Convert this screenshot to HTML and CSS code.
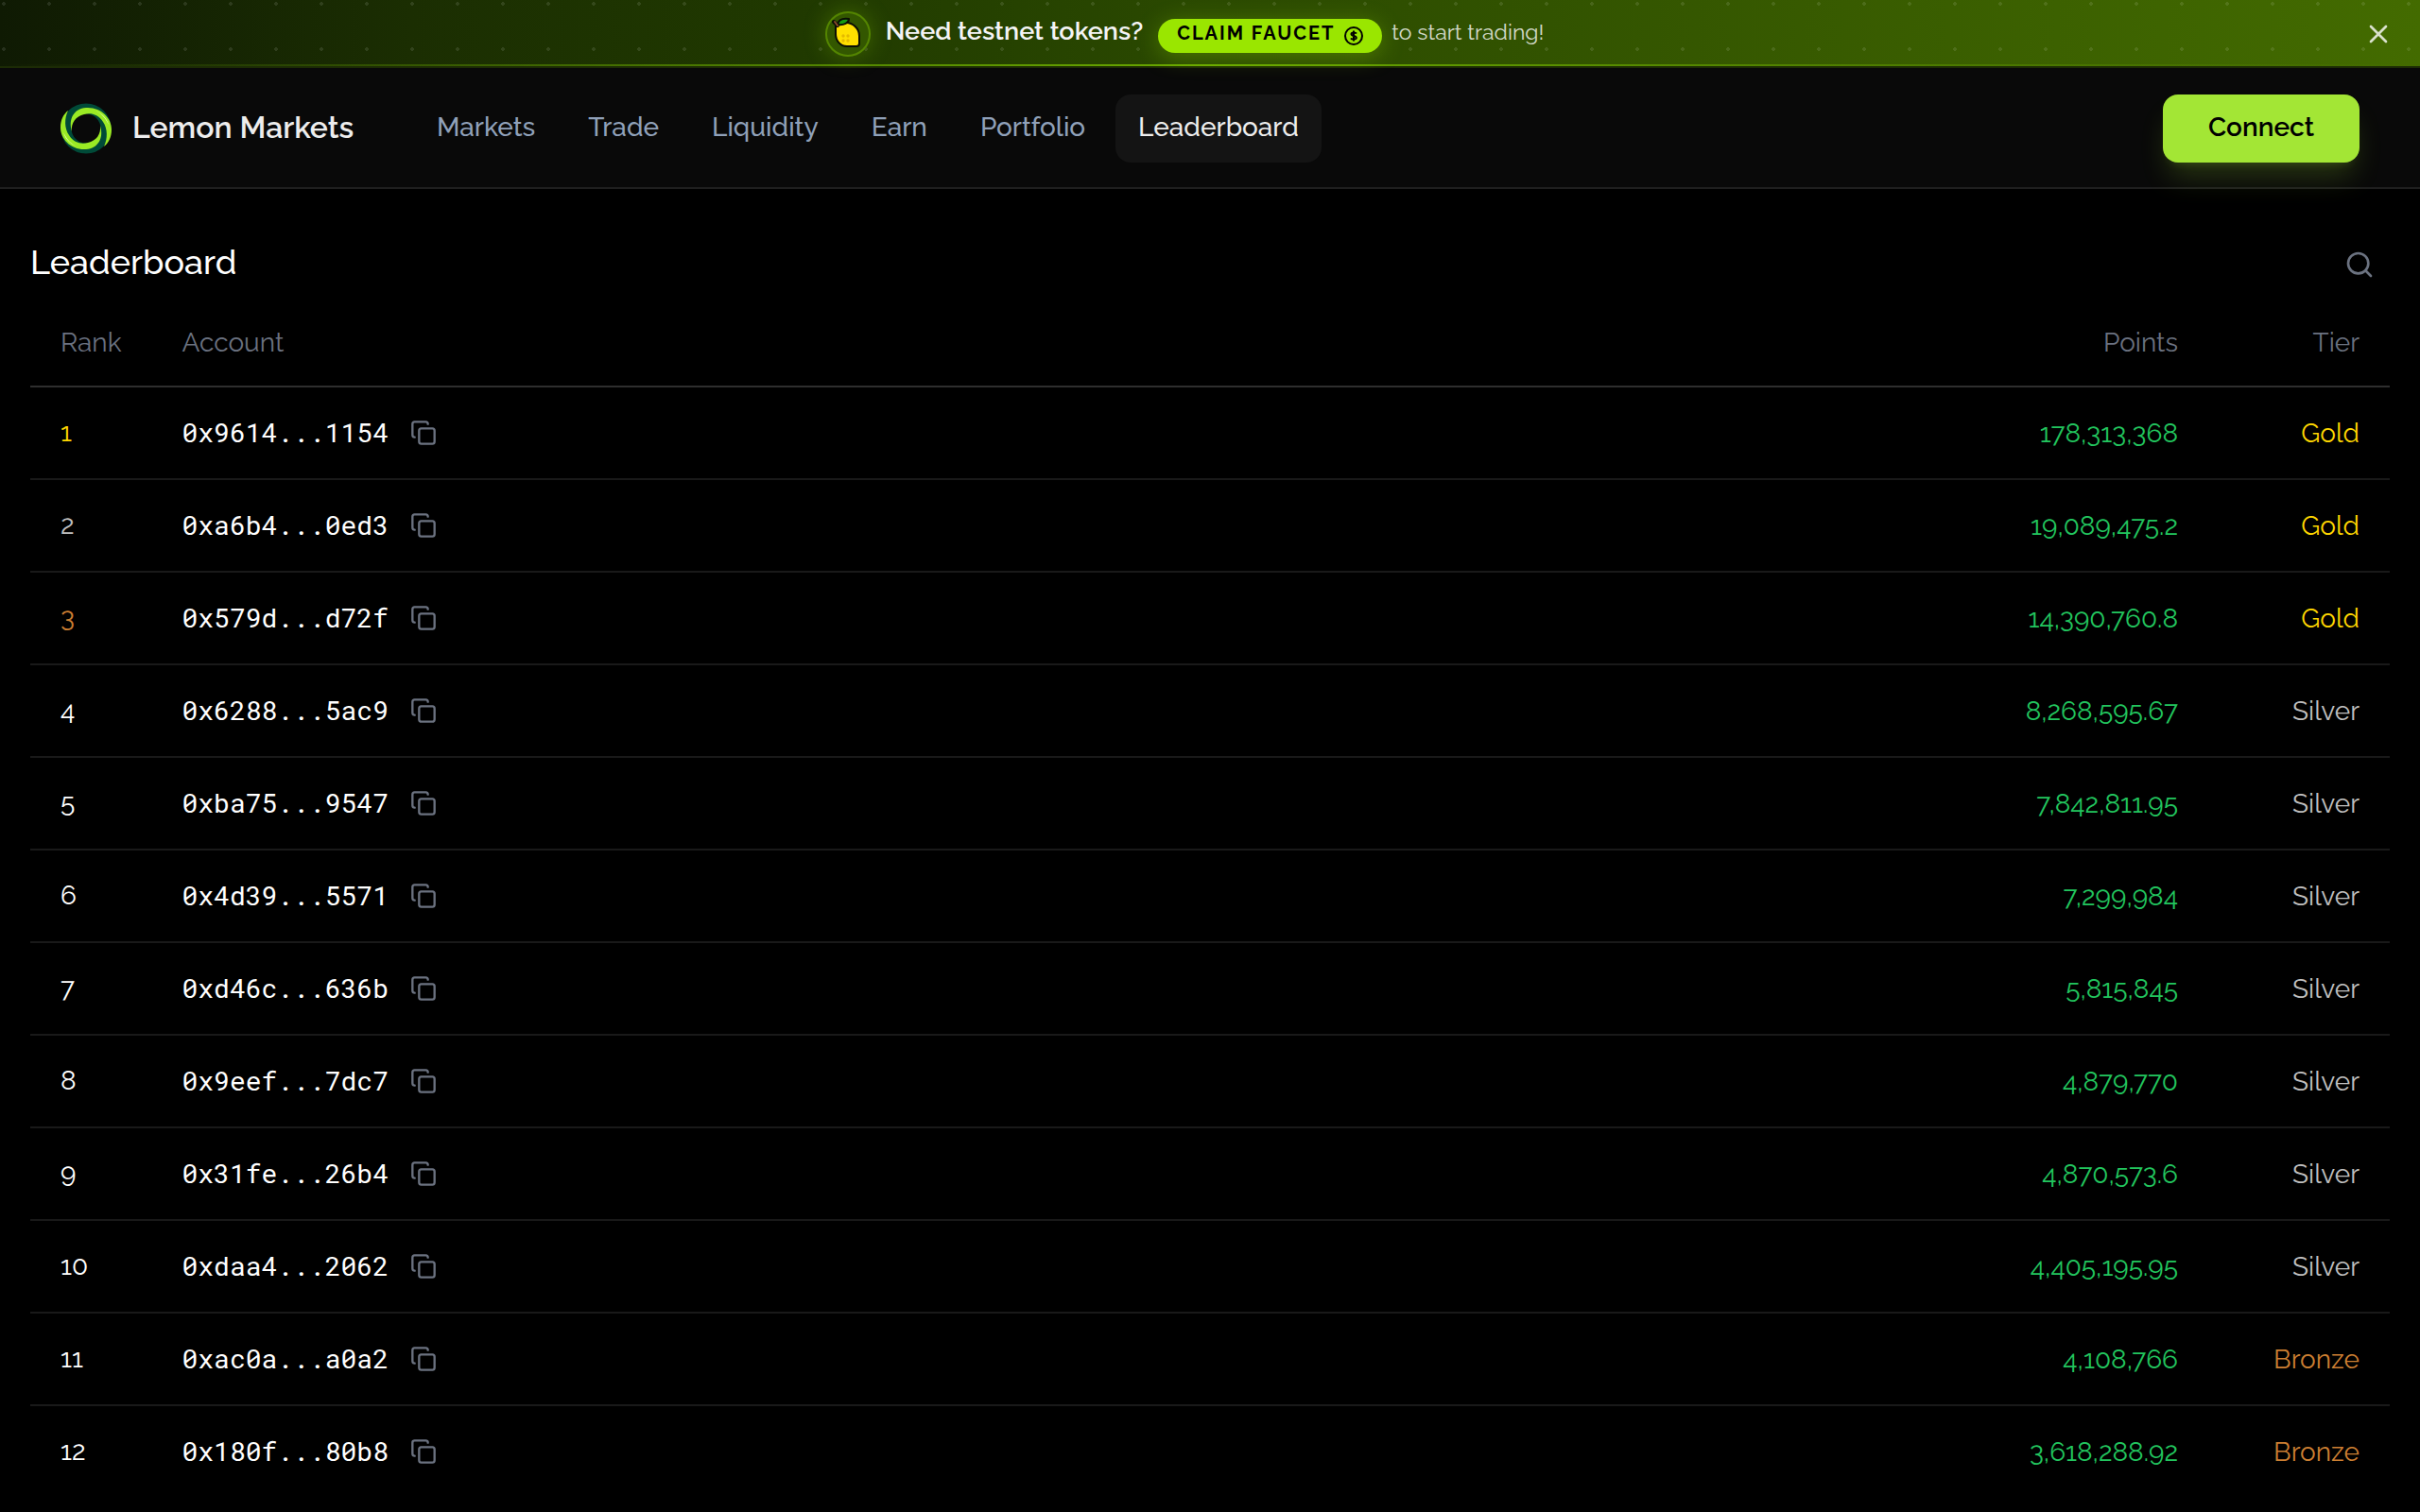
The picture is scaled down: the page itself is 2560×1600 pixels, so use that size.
FILE: index.html
```html
<!DOCTYPE html>
<html lang="en">
<head>
  <meta charset="UTF-8" />
  <meta name="viewport" content="width=device-width, initial-scale=1" />
  <title>Leaderboard | Lemon Markets</title>
  <link rel="stylesheet" href="styles.css">
</head>
<body>

  <!-- Shared icons -->
  <svg class="sprite" aria-hidden="true">
    <symbol id="copy" viewBox="0 0 24 24">
      <rect x="8" y="8" width="14" height="14" rx="2" />
      <path d="M4 16c-1.1 0-2-.9-2-2V4c0-1.1.9-2 2-2h10c1.1 0 2 .9 2 2" />
    </symbol>
  </svg>

  <!-- Faucet banner -->
  <div class="banner">
    <div class="banner-content">
      <span class="lemon">
        <svg viewBox="0 0 48 48" aria-hidden="true">
          <path d="M11 15V24C11 31 16 37 23 37H33C35 37 36 36 36 34V26C36 18 29 12 22 12C17 12 13 13 11 15Z" fill="#ffe000" stroke="#0a0d05" stroke-width="2" stroke-linejoin="round" />
          <path d="M13 14C14 9 18 7 25 8C25 12 20 15 13 14Z" fill="#169c12" stroke="#0a0d05" stroke-width="2" stroke-linejoin="round" />
          <path d="M9 11L13 15" stroke="#0a0d05" stroke-width="4" stroke-linecap="round" />
          <path d="M10 11L13 15" stroke="#8a4b2b" stroke-width="2" stroke-linecap="round" />
          <g fill="#e5b900"><circle cx="19" cy="26" r="1.700" /><circle cx="24" cy="26" r="1.700" /><circle cx="19" cy="31" r="1.700" /><circle cx="24" cy="31" r="1.700" /></g>
        </svg>
      </span>
      <strong class="banner-title">Need testnet tokens?</strong>
      <a class="faucet" href="#faucet"><span>CLAIM FAUCET</span>
        <svg viewBox="0 0 20 20" fill="none" stroke="currentColor" aria-hidden="true">
          <circle cx="10" cy="10" r="9" stroke-width="2" />
          <path d="M13 7.500C12 6 7.500 6 7.500 8C7.500 10.500 12.800 9.500 12.800 12C12.800 14 8 14 7 12.500M10 4.500V15.500" stroke-width="2" />
        </svg>
      </a>
      <span class="banner-note">to start trading!</span>
    </div>
    <button class="close" type="button" aria-label="Dismiss">
      <svg class="icon" viewBox="0 0 24 24" aria-hidden="true"><path d="M18 6L6 18M6 6l12 12" /></svg>
    </button>
  </div>

  <header class="header">
    <a class="brand" href="#home">
      <svg viewBox="0 0 54 54" aria-hidden="true">
        <circle cx="27" cy="27" r="21" fill="none" stroke="#004a38" stroke-width="11" />
        <g id="swirl">
          <path d="M12 30C8 17 14 6 27 5C43 4 54 16 54 28C54 36 51 42 46 46C50 38 50 27 45 20C40 12 32 10 25 12C16 14 11 21 12 30Z" fill="#9bea24" />
          <path d="M37 8C44 11 49 16 51 23C47 15 43 11 37 8Z" fill="#e9ffc4" />
        </g>
        <use href="#swirl" transform="rotate(180 27 27)" />
      </svg>
      <span>Lemon Markets</span>
    </a>
    <nav class="nav">
      <a href="#markets">Markets</a>
      <a href="#trade">Trade</a>
      <a href="#liquidity">Liquidity</a>
      <a href="#earn">Earn</a>
      <a href="#portfolio">Portfolio</a>
      <a class="active" href="#leaderboard">Leaderboard</a>
    </nav>
    <button class="connect" type="button">Connect</button>
  </header>

  <main>
    <div class="title-row">
      <h1>Leaderboard</h1>
      <button class="search" type="button" aria-label="Search">
        <svg class="icon" viewBox="0 0 24 24" aria-hidden="true"><circle cx="11" cy="11" r="8" /><path d="M21 21l-4.300-4.300" /></svg>
      </button>
    </div>

    <table>
      <thead>
        <tr><th class="rank">Rank</th><th>Account</th><th class="points">Points</th><th class="tier">Tier</th></tr>
      </thead>
      <tbody>
        <tr>
          <td class="rank gold">1</td>
          <td><div class="account">0x9614...1154 <button type="button" aria-label="Copy address"><svg class="icon"><use href="#copy" /></svg></button></div></td>
          <td class="points">178,313,368</td>
          <td class="tier gold">Gold</td>
        </tr>
        <tr>
          <td class="rank silver">2</td>
          <td><div class="account">0xa6b4...0ed3 <button type="button" aria-label="Copy address"><svg class="icon"><use href="#copy" /></svg></button></div></td>
          <td class="points">19,089,475.2</td>
          <td class="tier gold">Gold</td>
        </tr>
        <tr>
          <td class="rank bronze">3</td>
          <td><div class="account">0x579d...d72f <button type="button" aria-label="Copy address"><svg class="icon"><use href="#copy" /></svg></button></div></td>
          <td class="points">14,390,760.8</td>
          <td class="tier gold">Gold</td>
        </tr>
        <tr>
          <td class="rank">4</td>
          <td><div class="account">0x6288...5ac9 <button type="button" aria-label="Copy address"><svg class="icon"><use href="#copy" /></svg></button></div></td>
          <td class="points">8,268,595.67</td>
          <td class="tier silver">Silver</td>
        </tr>
        <tr>
          <td class="rank">5</td>
          <td><div class="account">0xba75...9547 <button type="button" aria-label="Copy address"><svg class="icon"><use href="#copy" /></svg></button></div></td>
          <td class="points">7,842,811.95</td>
          <td class="tier silver">Silver</td>
        </tr>
        <tr>
          <td class="rank">6</td>
          <td><div class="account">0x4d39...5571 <button type="button" aria-label="Copy address"><svg class="icon"><use href="#copy" /></svg></button></div></td>
          <td class="points">7,299,984</td>
          <td class="tier silver">Silver</td>
        </tr>
        <tr>
          <td class="rank">7</td>
          <td><div class="account">0xd46c...636b <button type="button" aria-label="Copy address"><svg class="icon"><use href="#copy" /></svg></button></div></td>
          <td class="points">5,815,845</td>
          <td class="tier silver">Silver</td>
        </tr>
        <tr>
          <td class="rank">8</td>
          <td><div class="account">0x9eef...7dc7 <button type="button" aria-label="Copy address"><svg class="icon"><use href="#copy" /></svg></button></div></td>
          <td class="points">4,879,770</td>
          <td class="tier silver">Silver</td>
        </tr>
        <tr>
          <td class="rank">9</td>
          <td><div class="account">0x31fe...26b4 <button type="button" aria-label="Copy address"><svg class="icon"><use href="#copy" /></svg></button></div></td>
          <td class="points">4,870,573.6</td>
          <td class="tier silver">Silver</td>
        </tr>
        <tr>
          <td class="rank">10</td>
          <td><div class="account">0xdaa4...2062 <button type="button" aria-label="Copy address"><svg class="icon"><use href="#copy" /></svg></button></div></td>
          <td class="points">4,405,195.95</td>
          <td class="tier silver">Silver</td>
        </tr>
        <tr>
          <td class="rank">11</td>
          <td><div class="account">0xac0a...a0a2 <button type="button" aria-label="Copy address"><svg class="icon"><use href="#copy" /></svg></button></div></td>
          <td class="points">4,108,766</td>
          <td class="tier bronze">Bronze</td>
        </tr>
        <tr>
          <td class="rank">12</td>
          <td><div class="account">0x180f...80b8 <button type="button" aria-label="Copy address"><svg class="icon"><use href="#copy" /></svg></button></div></td>
          <td class="points">3,618,288.92</td>
          <td class="tier bronze">Bronze</td>
        </tr>
      </tbody>
    </table>
  </main>

</body>
</html>
```
FILE: styles.css
```css
* {
  box-sizing: border-box;
}
body {
  margin: 0;
  background: #000;
  color: #fff;
  font-family: Raleway, Lato, sans-serif;
  font-size: 28px;
  line-height: 40px;
  font-variant-numeric: oldstyle-nums;
}
a {
  color: inherit;
  text-decoration: none;
}
button {
  border: 0;
  padding: 0;
  background: none;
  color: inherit;
  font: inherit;
  cursor: pointer;
}
svg {
  display: block;
}
.sprite {
  display: none;
}
.icon {
  width: 32px;
  height: 32px;
  fill: none;
  stroke: currentColor;
  stroke-width: 2;
  stroke-linecap: round;
  stroke-linejoin: round;
}

/* banner */
.banner {
  position: relative;
  height: 72px;
  padding: 12px 28px;
  border-bottom: 2px solid #1c2b05;
  background:
    linear-gradient(90deg, transparent, #6aa800 50%, transparent) bottom / 100% 2px no-repeat,
    radial-gradient(circle at 4px 4px, rgba(255, 255, 255, 0.1) 2px, transparent 2px) 0 0 / 48px 48px,
    linear-gradient(90deg, #0f1a03, #1b2e02 17%, #203900 33%, #2b4a00 50%, #355700 70%, #436b00);
}
.banner-content {
  display: flex;
  align-items: center;
  justify-content: center;
  padding-right: 54px;
}
.lemon {
  width: 48px;
  height: 48px;
  margin-right: 16px;
  border-radius: 50%;
  background: #335700;
  box-shadow: inset 0 0 0 2px #548500, 0 0 24px rgba(154, 230, 0, 0.25);
}
.banner-title {
  margin: 0 16px 6px 0;
  font-size: 27px;
  font-weight: 600;
  color: #f4f4f5;
}
.faucet {
  display: flex;
  align-items: center;
  height: 36px;
  margin: 4px 10px 0 0;
  padding: 0 20px;
  border-radius: 18px;
  background: #9ae600;
  box-shadow: 0 4px 24px rgba(154, 230, 0, 0.3);
  color: #000;
  font-size: 20px;
  font-weight: 700;
  letter-spacing: 2px;
}
.faucet span {
  margin-bottom: 6px;
}
.faucet svg {
  width: 20px;
  height: 20px;
  margin-left: 10px;
}
.banner-note {
  margin-bottom: 4px;
  font-size: 23px;
  color: rgba(255, 255, 255, 0.8);
}
.close {
  position: absolute;
  top: 20px;
  right: 28px;
  color: rgba(255, 255, 255, 0.8);
}

/* header */
.header {
  display: flex;
  align-items: center;
  height: 128px;
  padding: 2px 64px 0;
  border-bottom: 2px solid #1f1f1f;
  background: #090909;
}
.brand {
  display: flex;
  align-items: center;
  gap: 22px;
  width: 374px;
  color: #ededed;
  font-size: 32px;
  font-weight: 600;
  white-space: nowrap;
}
.brand svg {
  width: 54px;
  height: 54px;
}
.brand span {
  padding-bottom: 2px;
}
.nav {
  display: flex;
  gap: 8px;
}
.nav a {
  padding: 15px 24px 17px;
  border-radius: 16px;
  color: #90a1b9;
  font-weight: 500;
}
.nav .active {
  background: #141414;
  color: #ededed;
}
.connect {
  margin-left: auto;
  padding: 15px 48px 17px;
  border-radius: 16px;
  background: #a3e635;
  box-shadow: 0 20px 30px -6px rgba(163, 230, 53, 0.2), 0 8px 12px -8px rgba(163, 230, 53, 0.2);
  color: #000;
  font-weight: 600;
}

/* leaderboard */
main {
  padding: 56px 32px 0;
}
.title-row {
  display: flex;
  align-items: center;
  justify-content: space-between;
  height: 48px;
  padding-right: 16px;
}
h1 {
  margin: 0 0 6px;
  font-size: 36px;
  font-weight: 500;
}
.search {
  color: #6b7280;
}
table {
  width: 100%;
  margin-top: 22px;
  border-collapse: separate;
  border-spacing: 0;
}
th,
td {
  height: 98px;
  padding: 0 32px;
  border-bottom: 2px solid #191919;
  text-align: left;
}
th {
  height: 84px;
  padding-bottom: 8px;
  border-color: #2e2e2e;
  color: #6b7280;
  font-weight: 400;
}
tbody tr:last-child td {
  border-color: transparent;
}
.rank {
  width: 128px;
}
.account {
  display: flex;
  align-items: center;
  gap: 23px;
  font-family: "Roboto Mono", "DejaVu Sans Mono", monospace;
}
.account button {
  color: #6b7280;
}
.account .icon {
  width: 28px;
  height: 28px;
}
.points,
.tier {
  text-align: right;
}
td.points,
td.tier {
  padding-top: 2px;
}
td.points {
  color: #22c55e;
}
.tier {
  width: 192px;
}
.gold {
  color: #ffd700;
}
.silver {
  color: #c0c0c0;
}
.bronze {
  color: #cd7f32;
}
```
